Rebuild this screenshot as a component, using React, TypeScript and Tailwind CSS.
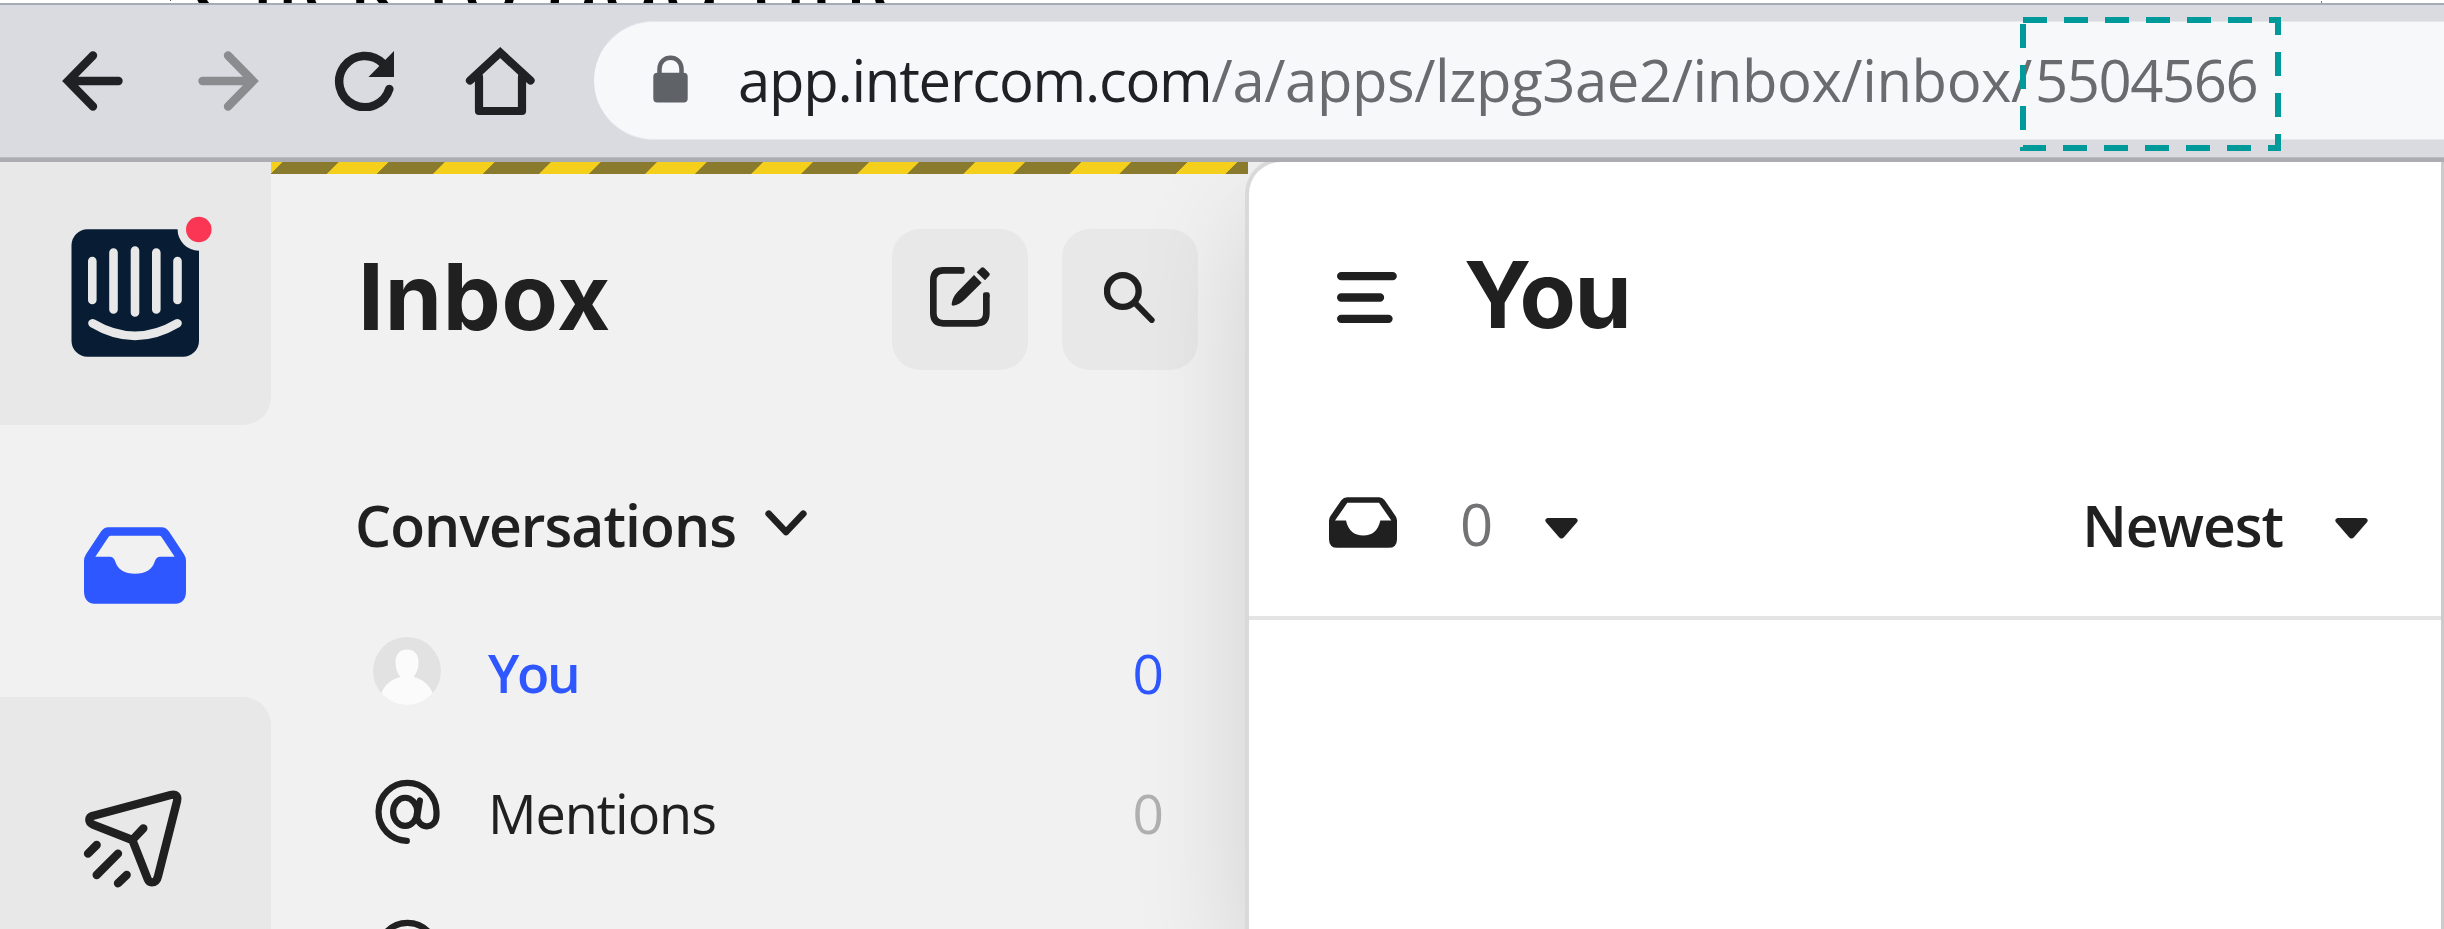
import type { ReactNode } from "react";

const TRAY =
  "M325 141H485Q498 141 507 154L552 222Q558 231 558 243V333Q558 371 520 371H290Q252 371 252 333V243Q252 231 258 222L303 154Q312 141 325 141ZM332 167Q328 167 325 171L286 230H330Q341 230 346 245Q358 281 405 281Q452 281 464 245Q469 230 480 230H524L485 171Q482 167 478 167Z";

const TRAY_SMALL =
  "M442 1042H537Q547 1042 554 1051L587 1099Q591 1105 591 1112V1168Q591 1194 565 1194H413Q387 1194 387 1168V1112Q387 1105 391 1099L424 1051Q431 1042 442 1042ZM442 1059L405 1112H438Q448 1157 490 1157Q531 1157 541 1112H574L537 1059Z";

function Caret() {
  return (
    <svg className="h-[21px] w-[33px]" viewBox="0 0 98 63" fill="#202020">
      <path d="M7 0H91Q101 3 96 12L57 57Q49 66 41 57L2 12Q-3 3 7 0Z" />
    </svg>
  );
}

function AtIcon() {
  return (
    <svg className="h-[65px] w-[65px]" viewBox="105 537 194 194" fill="none" stroke="#202020" strokeWidth="18.5" strokeLinecap="round">
      <path d="M200 721.5A86.5 86.5 0 1 1 288.500 634V645C288.500 690 228 690 230 640" />
      <ellipse cx="195" cy="635" rx="36" ry="42" />
      <path d="M239 601L231 650" />
    </svg>
  );
}

function Avatar() {
  return (
    <svg className="h-[68px] w-[68px]" viewBox="0 0 68 68">
      <clipPath id="avatar-clip">
        <circle cx="34" cy="34" r="34" />
      </clipPath>
      <g clipPath="url(#avatar-clip)">
        <rect width="68" height="68" fill="#e2e2e2" />
        <path d="M34 12.500C42 12.500 45.500 18 45.500 25C45.500 31 44 36 40.500 40C48 42 56 46 60 57L68 68H0L8 57C12 46 20 42 27.500 40C24 36 22.500 31 22.500 25C22.500 18 26 12.500 34 12.500Z" fill="#fbfbfb" />
      </g>
    </svg>
  );
}

function Row({ icon, label, count, labelClass, countClass }: { icon: ReactNode; label: string; count?: string; labelClass: string; countClass: string }) {
  return (
    <div className="flex h-[140px] shrink-0 items-center pr-[85px] pl-[102px]">
      <div className="flex w-[68px] justify-center">{icon}</div>
      <span className={"ml-[47px] grow pt-[3px] leading-[70px] " + labelClass}>{label}</span>
      <span className={"pt-[3px] text-[55px] leading-[70px] " + countClass}>{count}</span>
    </div>
  );
}

export default function App() {
  return (
    <div className="flex h-[929px] w-[2444px] flex-col overflow-hidden bg-white font-['Open_Sans',sans-serif] text-[#202020]">
      <div className="flex h-[3px] shrink-0 overflow-hidden bg-white">
        <span className="ml-[170px] h-px w-px bg-[#555]" />
        <span className="-mt-[71px] ml-[17px] text-[99px] leading-[100px] whitespace-nowrap text-black">Click to add title</span>
        <span className="mt-px mr-[122px] ml-auto w-px bg-[#777]" />
      </div>

      <div className="flex h-[154px] shrink-0 border-t-2 border-[#a6abb6] bg-[#dadbe0] pt-[16px]">
        <div className="flex h-[119px] shrink-0 items-center pl-[62px]">
          <svg className="h-[60px] w-[61px]" viewBox="0 0 61 60" fill="none" stroke="#202124" strokeWidth="8.4" strokeLinecap="round">
            <path d="M31 4.500L6 30L31 55.500M8 30H56.500" />
          </svg>
          <svg className="ml-[75px] h-[60px] w-[61px]" viewBox="0 0 61 60" fill="none" stroke="#8b8c90" strokeWidth="8.4" strokeLinecap="round">
            <path d="M30 4.500L55 30L30 55.500M53 30H4.500" />
          </svg>
          <svg className="ml-[75px] h-[60px] w-[60px]" viewBox="334 51 60 60" fill="none" stroke="#202124" strokeWidth="8.5" strokeLinecap="round">
            <path d="M383 63.500A25.600 25.600 0 1 0 389.300 89" />
            <path d="M394 51V77H368.500Z" fill="#202124" stroke="none" />
          </svg>
          <svg className="ml-[71px] h-[70px] w-[70px]" viewBox="465 46 70 70" fill="none" stroke="#202124" strokeWidth="8.2" strokeLinecap="round">
            <path d="M470 80.500L500.200 52.500L530.500 80.500" />
            <path d="M479 77V111H522V77" strokeLinejoin="round" />
          </svg>
        </div>
        <div className="ml-[59px] flex h-[119px] grow items-center rounded-l-full border-y border-[#e6e8ec] bg-[#f6f8fa] pl-[59px]">
          <svg className="-mt-[4px] h-[48px] w-[35px] shrink-0" viewBox="653 55 35 48">
            <rect x="653.300" y="72.700" width="34.400" height="29.800" rx="4" fill="#5f6368" />
            <path d="M659.500 74V69C659.500 54 681.500 54 681.500 69V74" fill="none" stroke="#5f6368" strokeWidth="4.500" />
          </svg>
          <p className="ml-[50px] pb-[1px] text-[58px] leading-[100px] whitespace-nowrap">
            <span className="tracking-[-1.25px] text-[#202124]">app.intercom.com</span>
            <span className="tracking-[-0.42px] text-[#696b6e]">/a/apps/lzpg3ae2/inbox/inbox/</span>
            <span className="ml-[3px] tracking-[-1.4px] text-[#696b6e]">5504566</span>
          </p>
        </div>
      </div>
      <div className="h-[5px] shrink-0 border-t border-[#b9bbc0] bg-[#acadb2]" />

      <div className="flex min-h-0 grow overflow-hidden bg-[#f1f1f1]">
        <nav className="flex w-[271px] shrink-0 flex-col">
          <div className="h-[263px] shrink-0 rounded-br-[28px] bg-[#e8e8e8] pt-[54px] pl-[71px]">
            <svg className="h-[142px] w-[142px]" viewBox="0 -13 142 142">
              <rect x="0.500" y="0.300" width="127.500" height="127.500" rx="16" fill="#081d34" />
              <g stroke="#e8e8e8" strokeWidth="8.600" strokeLinecap="round" fill="none">
                <path d="M21.300 32V71M42.500 23.500V80.500M64 21.500V83.500M85.300 23.500V80.500M106.500 32V71M21.500 94.300Q64 119.500 106.500 94.300" />
              </g>
              <circle cx="127.800" cy="0.500" r="21.200" fill="#e8e8e8" />
              <circle cx="127.800" cy="0.500" r="12.800" fill="#fb3654" />
            </svg>
          </div>
          <div className="h-[272px] shrink-0 pt-[102px] pl-[84px]">
            <svg className="h-[77px] w-[102px]" viewBox="252 141 306 230">
              <path d={TRAY} fill="#2e57ff" fillRule="evenodd" />
            </svg>
          </div>
          <div className="grow rounded-tr-[28px] bg-[#e8e8e8] pt-[90px] pl-[80px]">
            <svg className="h-[105px] w-[105px]" viewBox="240 922 315 315" fill="none" stroke="#202020" strokeWidth="25" strokeLinecap="round" strokeLinejoin="round">
              <path d="M280 1008L512 946Q536 941 531 965L474 1190Q470 1208 455 1208Q447 1208 443 1198L397 1081L279 1035Q268 1029 268 1021Q268 1011 280 1008ZM397 1081L430 1046" />
              <path d="M264 1122L290 1096M290 1186L354 1122M354 1211L380 1186" />
            </svg>
          </div>
        </nav>

        <section className="flex w-[978px] shrink-0 flex-col">
          <div className="relative z-10 h-[12px] w-[977px] shrink-0 bg-[repeating-linear-gradient(135deg,#f4cf1b_0px,#f4cf1b_8px,#8a7a2e_8.500px,#8a7a2e_47.700px,#f4cf1b_48.200px,#f4cf1b_75px)]" />
          <header className="mt-[55px] flex h-[141px] shrink-0 items-center pr-[51px] pl-[87px]">
            <h1 className="grow pb-[5px] font-['Inter',sans-serif] text-[92px] leading-[120px] font-bold tracking-[0.8px]">Inbox</h1>
            <div className="flex h-[141px] w-[136px] items-center justify-center rounded-[28px] bg-[#e8e8e8]">
              <svg className="-mt-[6px] h-[60px] w-[60px]" viewBox="208 203 180 180">
                <path d="M304 213H248Q218 213 218 243V342Q218 372 248 372H347Q377 372 377 342V287" fill="none" stroke="#202020" strokeWidth="20" />
                <path d="M300 203H306Q312 203 312 209V217Q312 223 306 223H300ZM367 292V285Q367 279 373 279H381Q387 279 387 285V292Z" fill="#202020" />
                <path d="M340 227L363 250L313 300Q296 317 277 319Q272 319 273 314Q275 294 291 277ZM348 219L361 206Q366 201 371 206L385 220Q390 225 385 230L373 243Z" fill="#202020" />
              </svg>
            </div>
            <div className="ml-[34px] flex h-[141px] w-[136px] items-center justify-center rounded-[28px] bg-[#e8e8e8]">
              <svg className="-mt-[4px] mr-[2px] h-[51px] w-[51px]" viewBox="732 216 153 153" fill="none" stroke="#202020">
                <circle cx="788.500" cy="273" r="47.500" strokeWidth="19" />
                <path d="M824 308L875 360" strokeWidth="18" strokeLinecap="round" />
              </svg>
            </div>
          </header>
          <div className="mt-[124px] flex h-[61px] shrink-0 items-center pl-[84px]">
            <span className="text-[57px] leading-[60px] font-semibold tracking-[-0.92px]">Conversations</span>
            <svg className="-mt-[4px] ml-[29px] h-[26px] w-[42px]" viewBox="1278 899 124 77" fill="none" stroke="#202020" strokeWidth="20" strokeLinecap="round" strokeLinejoin="round">
              <path d="M1289 910L1340 964L1391 910" />
            </svg>
          </div>
          <div className="mt-[46px] flex flex-col">
            <Row icon={<Avatar />} label="You" count="0" labelClass="text-[53px] font-semibold tracking-[-2.3px] text-[#2e57ff]" countClass="text-[#2e57ff]" />
            <Row icon={<AtIcon />} label="Mentions" count="0" labelClass="text-[54px] tracking-[-1.05px]" countClass="text-[#b0b0b0]" />
            <Row icon={<AtIcon />} label="" labelClass="" countClass="" />
          </div>
        </section>

        <main className="flex w-[1192px] shrink-0 flex-col rounded-tl-[32px] bg-white shadow-[0_0_0_4px_#d9d9d9,0_50px_120px_0_rgba(0,0,0,0.14)]">
          <header className="flex h-[264px] shrink-0 items-center pl-[88px]">
            <svg className="mt-[6px] h-[51px] w-[60px]" viewBox="412 366 180 153" stroke="#202020" strokeWidth="25" strokeLinecap="round">
              <path d="M424.500 378.500H579M424.500 442.500H541M424.500 506.500H566.500" />
            </svg>
            <h2 className="mt-[2px] ml-[67px] font-['Inter',sans-serif] text-[92px] leading-[120px] font-bold tracking-[-1.6px]">You</h2>
          </header>
          <div className="flex h-[194px] shrink-0 items-center border-b-4 border-[#e4e4e4] pr-[73px] pl-[80px]">
            <svg className="mt-[2px] h-[51px] w-[68px]" viewBox="387 1042 204 152">
              <path d={TRAY_SMALL} fill="#202020" fillRule="evenodd" />
            </svg>
            <span className="mt-[6px] ml-[63px] text-[58px] leading-[60px] text-[#737376]">0</span>
            <span className="mt-[15px] ml-[52px]">
              <Caret />
            </span>
            <span className="mt-[7px] ml-auto text-[57px] leading-[60px] font-semibold tracking-[-1.04px]">Newest</span>
            <span className="mt-[15px] ml-[52px]">
              <Caret />
            </span>
          </div>
        </main>
        <div className="relative z-10 w-[3px] shrink-0 bg-[#cbcbcb]" />
      </div>

      <svg className="absolute top-[17px] left-[2020px] h-[134px] w-[261px]" viewBox="0 0 261 134" fill="none">
        <rect x="3" y="3" width="255" height="128" stroke="#009a9a" strokeWidth="6" strokeDasharray="24 17" />
      </svg>
    </div>
  );
}
